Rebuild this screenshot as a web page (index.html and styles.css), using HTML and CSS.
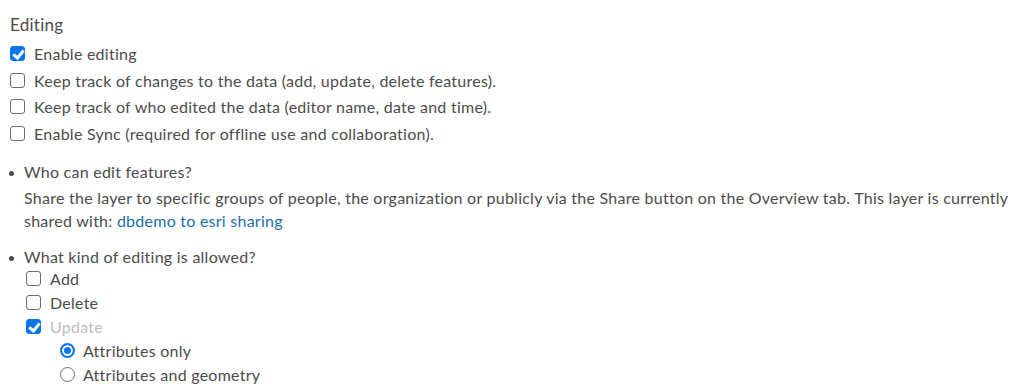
FILE: index.html
```html
<!DOCTYPE html>
<html lang="en">
<head>
    <meta charset="UTF-8">
    <title>Editing</title>
    <link rel="stylesheet" href="styles.css">
</head>
<body>
    <div class="panel">
        <h3>Editing</h3>
        <label class="check"><span class="box on"></span>Enable editing</label>
        <label class="check"><span class="box"></span>Keep track of changes to the data (add, update, delete features).</label>
        <label class="check"><span class="box"></span>Keep track of who edited the data (editor name, date and time).</label>
        <label class="check"><span class="box"></span>Enable Sync (required for offline use and collaboration).</label>

        <ul class="questions">
            <li class="who">
                <div class="q">Who can edit features?</div>
                <p>Share the layer to specific groups of people, the organization or publicly via the Share button on the Overview tab. This layer is currently shared with: <a href="#">dbdemo to esri sharing</a></p>
            </li>
            <li class="kind">
                <div class="q">What kind of editing is allowed?</div>
                <div class="ops">
                    <label class="check sub"><span class="box"></span>Add</label>
                    <label class="check sub"><span class="box"></span>Delete</label>
                    <label class="check sub disabled"><span class="box on"></span>Update</label>
                    <div class="radios">
                        <label class="radio"><span class="dot on"></span>Attributes only</label>
                        <label class="radio"><span class="dot"></span>Attributes and geometry</label>
                    </div>
                </div>
            </li>
        </ul>
    </div>
</body>
</html>
```
FILE: styles.css
```css
body{margin:0;font-family:Lato,"Open Sans",sans-serif;color:#4c4c4c;background:#fff;letter-spacing:0.25px}
.panel{padding:13px 8px 0 10px}
h3{margin:0 0 3px;font-size:17px;font-weight:400;line-height:24px}
.check{display:flex;align-items:center;gap:9px;font-size:16px;height:26.7px}
.box{width:13px;height:13px;border:1px solid #6e6e6e;border-radius:3px;flex:none;background:#fff;position:relative}
.box.on{background:#0a77e8;border-color:#0a77e8}
.box.on::after{content:"";position:absolute;left:4px;top:1px;width:4px;height:8px;border:solid #fff;border-width:0 3px 3px 0;transform:rotate(40deg)}
.questions{list-style:none;margin:13px 0 0;padding:0}
.questions li{position:relative;padding-left:14px;font-size:16px}
.questions li::before{content:"";position:absolute;left:-1px;top:11px;width:5px;height:5px;border-radius:50%;background:#4c4c4c}
.q{line-height:24px}
.questions p{margin:2px 0 0;line-height:23px}
a{color:#1b6fad;text-decoration:none}
.kind{margin-top:13px}
.ops{padding-left:2px;margin-top:-2px}
.check.sub{height:24px}
.disabled{color:#bdbdbd}
.radios{padding-left:34px}
.radio{display:flex;align-items:center;gap:8px;height:24px}
.dot{border:1px solid #6e6e6e;border-radius:50%;flex:none;box-sizing:border-box;width:15px;height:15px}
.dot.on{border:2px solid #0a77e8;background:#0a77e8;box-shadow:inset 0 0 0 2px #fff}
```
